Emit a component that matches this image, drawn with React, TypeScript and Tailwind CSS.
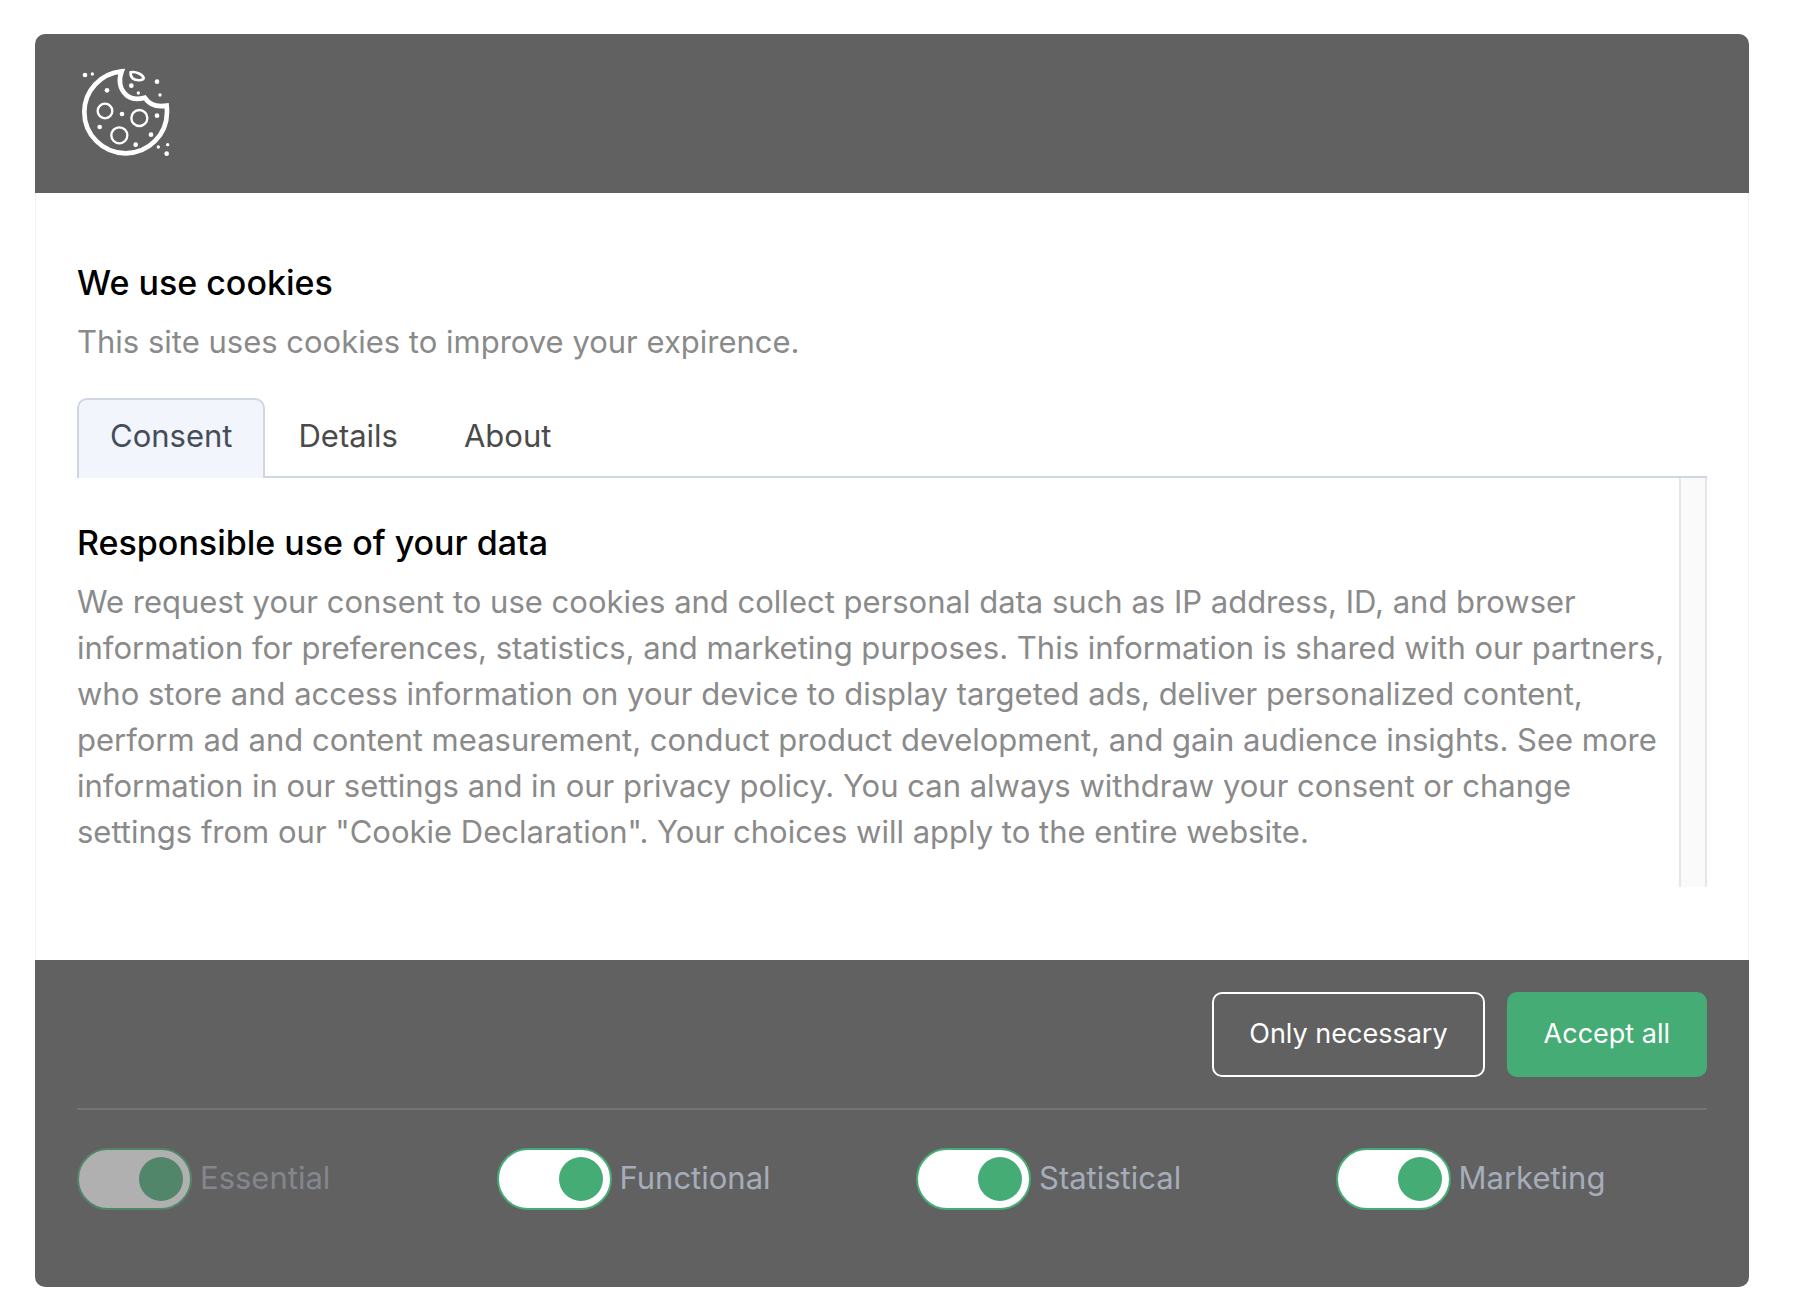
import { useState } from "react";

const TABS = [
  {
    id: "consent",
    label: "Consent",
    title: "Responsible use of your data",
    text: 'We request your consent to use cookies and collect personal data such as IP address, ID, and browser information for preferences, statistics, and marketing purposes. This information is shared with our partners, who store and access information on your device to display targeted ads, deliver personalized content, perform ad and content measurement, conduct product development, and gain audience insights. See more information in our settings and in our privacy policy. You can always withdraw your consent or change settings from our "Cookie Declaration". Your choices will apply to the entire website.',
  },
  { id: "details", label: "Details", title: "Details", text: "" },
  { id: "about", label: "About", title: "About", text: "" },
];

const CATEGORIES = [
  { id: "essential", label: "Essential", required: true },
  { id: "functional", label: "Functional", required: false },
  { id: "statistical", label: "Statistical", required: false },
  { id: "marketing", label: "Marketing", required: false },
];

const CRUMBS = [
  [45, 59, 7],
  [67, 56, 5],
  [111, 105, 7],
  [156, 176, 7],
  [89, 215, 7],
  [197, 268, 7],
  [243, 238, 7],
  [261, 181, 7],
  [184, 91, 7],
  [205, 113, 5],
  [261, 79, 7],
  [270, 119, 5],
  [265, 275, 5],
  [293, 268, 5],
  [290, 295, 7],
];

const CookieIcon = () => (
  <svg className="size-[92px]" viewBox="24 29 276 276" fill="none" stroke="#fff" aria-hidden="true">
    <path
      d="M155 48C93 54 43 105 43 170A124 124 0 0 0 291 170Q291 160 290 151C262 156 238 148 224 127C203 133 185 132 170 120C148 102 145 73 155 48Z"
      strokeWidth="14"
    />
    <path d="M182 51C197 47 220 58 221 69C218 77 197 76 188 69C183 64 181 58 182 51Z" strokeWidth="8" />
    <g strokeWidth="7">
      <circle cx="105" cy="167" r="22" />
      <circle cx="208" cy="188" r="24" />
      <circle cx="148" cy="240" r="24" />
    </g>
    <g fill="#fff" stroke="none">
      {CRUMBS.map(([cx, cy, r]) => (
        <circle key={`${cx}-${cy}`} cx={cx} cy={cy} r={r} />
      ))}
    </g>
  </svg>
);

const App = () => {
  const [tab, setTab] = useState("consent");
  const [accepted, setAccepted] = useState<Record<string, boolean>>({
    essential: true,
    functional: true,
    statistical: true,
    marketing: true,
  });

  const setAll = (value: boolean) =>
    setAccepted({ essential: true, functional: value, statistical: value, marketing: value });

  const active = TABS.find((t) => t.id === tab) ?? TABS[0];

  return (
    <main className="bg-white pt-[34px] pr-[71px] pb-4 pl-[35px] font-['Inter',sans-serif]">
      <section className="overflow-hidden rounded-[10px]" aria-labelledby="cookie-title">
        <header className="bg-[#616161] px-[43px] pt-[31px] pb-9">
          <CookieIcon />
        </header>

        <div className="border-x border-[#f3f3f3] px-[41px] pt-[68px] pb-[73px]">
          <h1 id="cookie-title" className="text-[34px] leading-[44px] font-medium text-black">
            We use cookies
          </h1>
          <p className="mt-[14px] text-[31px] leading-[46px] text-[#8a8a8a]">
            This site uses cookies to improve your expirence.
          </p>

          <div className="mt-[33px] flex border-b-2 border-[#cfd6e0]" role="tablist">
            {TABS.map((t) => (
              <button
                key={t.id}
                type="button"
                role="tab"
                aria-selected={t.id === tab}
                onClick={() => setTab(t.id)}
                className={
                  t.id === tab
                    ? "-mb-[2px] rounded-t-[10px] border-2 border-b-0 border-[#cfd6e0] bg-[#f2f5fb] px-[31px] pt-[14px] pb-5 text-[31px] leading-[44px] text-[#454d5a]"
                    : "px-[33px] pt-4 pb-[18px] text-[31px] leading-[44px] text-[#4a4a4a]"
                }
              >
                {t.label}
              </button>
            ))}
          </div>

          <div className="flex" role="tabpanel">
            <div className="flex-1 pt-[43px] pb-8">
              <h2 className="text-[34px] leading-[44px] font-medium text-black">{active.title}</h2>
              <p className="mt-[14px] text-[31px] leading-[46px] text-[#8a8a8a]">{active.text}</p>
            </div>
            <div className="w-7 border-x-2 border-[#e6e6e6] bg-[#fafafa]" />
          </div>
        </div>

        <footer className="bg-[#616161] px-[42px] pt-8 pb-[77px]">
          <div className="flex justify-end gap-[22px]">
            <button
              type="button"
              onClick={() => setAll(false)}
              className="rounded-[10px] border-2 border-white px-[35px] pt-[19px] pb-[21px] text-[27px] leading-[41px] text-white"
            >
              Only necessary
            </button>
            <button
              type="button"
              onClick={() => setAll(true)}
              className="rounded-[10px] border-2 border-[#45ac76] bg-[#45ac76] px-[35px] pt-[19px] pb-[21px] text-[27px] leading-[41px] text-white"
            >
              Accept all
            </button>
          </div>

          <hr className="mt-[31px] border-t-2 border-[#73747a]" />

          <div className="mt-[38px] grid grid-cols-4 gap-12">
            {CATEGORIES.map((c) => (
              <div key={c.id} className={c.required ? "flex items-center gap-2 opacity-50" : "flex items-center gap-2"}>
                <input
                  id={c.id}
                  type="checkbox"
                  checked={accepted[c.id]}
                  disabled={c.required}
                  onChange={(e) => setAccepted({ ...accepted, [c.id]: e.target.checked })}
                  className="flex h-[62px] w-[115px] shrink-0 appearance-none items-center rounded-full border-2 border-[#45ac76] bg-white px-[7px] before:size-11 before:rounded-full before:bg-[#45ac76] checked:justify-end"
                />
                <label htmlFor={c.id} className="pb-[2px] text-[31px] leading-[44px] text-[#a6adba]">
                  {c.label}
                </label>
              </div>
            ))}
          </div>
        </footer>
      </section>
    </main>
  );
};

export default App;
